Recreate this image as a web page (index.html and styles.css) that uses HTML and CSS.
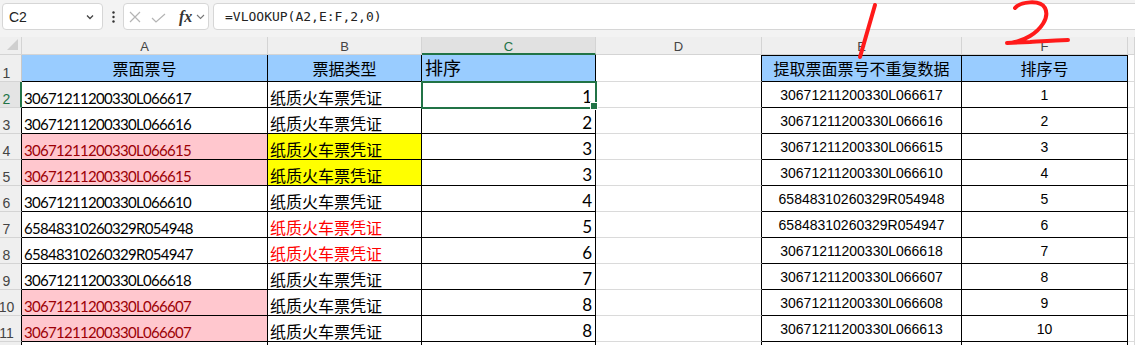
FILE: index.html
```html
<!DOCTYPE html>
<html lang="zh-CN">
<head>
<meta charset="utf-8">
<title>Sheet</title>
<link rel="stylesheet" href="styles.css">
</head>
<body>
<div class="app">
  <div class="toolbar">
    <div class="namebox"><span>C2</span>
      <svg class="chev" width="8" height="6" viewBox="0 0 8 6"><path d="M1 1.5 L4 4.5 L7 1.5" fill="none" stroke="#444" stroke-width="1.3"/></svg>
    </div>
    <div class="sep"><svg width="3" height="12" viewBox="0 0 3 12"><circle cx="1.5" cy="1.5" r="1.2" fill="#333"/><circle cx="1.5" cy="6" r="1.2" fill="#333"/><circle cx="1.5" cy="10.5" r="1.2" fill="#333"/></svg></div>
    <div class="fxbox">
      <svg class="ix" width="12" height="12" viewBox="0 0 12 12"><path d="M1 1 L11 11 M11 1 L1 11" stroke="#b4b4b4" stroke-width="1.2" fill="none"/></svg>
      <svg class="iv" width="15" height="10" viewBox="0 0 15 10"><path d="M1 5 L5 9 L14 1" stroke="#b4b4b4" stroke-width="1.2" fill="none"/></svg>
      <span class="fx">fx</span>
      <svg class="ic" width="9" height="6" viewBox="0 0 9 6"><path d="M1 1 L4.5 4.5 L8 1" fill="none" stroke="#777" stroke-width="1.1"/></svg>
    </div>
    <div class="formula">=VLOOKUP(A2,E:F,2,0)</div>
  </div>

  <div class="sheet">
    <div class="ch corner"><svg width="12" height="12" viewBox="0 0 12 12"><path d="M11 0 L11 11 L0 11 Z" fill="#cfcfcf"/></svg></div>
    <div class="ch">A</div>
    <div class="ch">B</div>
    <div class="ch on">C</div>
    <div class="ch">D</div>
    <div class="ch">E</div>
    <div class="ch">F</div>
    <div class="ch"></div>

    <div class="rh r1">1</div>
    <div class="c k h">票面票号</div>
    <div class="c k h">票据类型</div>
    <div class="c k h l">排序</div>
    <div class="c kr"></div>
    <div class="c k h t">提取票面票号不重复数据</div>
    <div class="c k h t">排序号</div>
    <div class="c"></div>

    <div class="rh on">2</div>
    <div class="c k num">30671211200330L066617</div>
    <div class="c k zh">纸质火车票凭证</div>
    <div class="c k n sel">1</div>
    <div class="c kr"></div>
    <div class="c k e">30671211200330L066617</div>
    <div class="c k e">1</div>
    <div class="c"></div>

    <div class="rh">3</div>
    <div class="c k num">30671211200330L066616</div>
    <div class="c k zh">纸质火车票凭证</div>
    <div class="c k n">2</div>
    <div class="c kr"></div>
    <div class="c k e">30671211200330L066616</div>
    <div class="c k e">2</div>
    <div class="c"></div>

    <div class="rh">4</div>
    <div class="c k num pk">30671211200330L066615</div>
    <div class="c k zh yl">纸质火车票凭证</div>
    <div class="c k n">3</div>
    <div class="c kr"></div>
    <div class="c k e">30671211200330L066615</div>
    <div class="c k e">3</div>
    <div class="c"></div>

    <div class="rh">5</div>
    <div class="c k num pk">30671211200330L066615</div>
    <div class="c k zh yl">纸质火车票凭证</div>
    <div class="c k n">3</div>
    <div class="c kr"></div>
    <div class="c k e">30671211200330L066610</div>
    <div class="c k e">4</div>
    <div class="c"></div>

    <div class="rh">6</div>
    <div class="c k num">30671211200330L066610</div>
    <div class="c k zh">纸质火车票凭证</div>
    <div class="c k n">4</div>
    <div class="c kr"></div>
    <div class="c k e">65848310260329R054948</div>
    <div class="c k e">5</div>
    <div class="c"></div>

    <div class="rh">7</div>
    <div class="c k num">65848310260329R054948</div>
    <div class="c k zh red">纸质火车票凭证</div>
    <div class="c k n">5</div>
    <div class="c kr"></div>
    <div class="c k e">65848310260329R054947</div>
    <div class="c k e">6</div>
    <div class="c"></div>

    <div class="rh">8</div>
    <div class="c k num">65848310260329R054947</div>
    <div class="c k zh red">纸质火车票凭证</div>
    <div class="c k n">6</div>
    <div class="c kr"></div>
    <div class="c k e">30671211200330L066618</div>
    <div class="c k e">7</div>
    <div class="c"></div>

    <div class="rh">9</div>
    <div class="c k num">30671211200330L066618</div>
    <div class="c k zh">纸质火车票凭证</div>
    <div class="c k n">7</div>
    <div class="c kr"></div>
    <div class="c k e">30671211200330L066607</div>
    <div class="c k e">8</div>
    <div class="c"></div>

    <div class="rh">10</div>
    <div class="c k num pk">30671211200330L066607</div>
    <div class="c k zh">纸质火车票凭证</div>
    <div class="c k n">8</div>
    <div class="c kr"></div>
    <div class="c k e">30671211200330L066608</div>
    <div class="c k e">9</div>
    <div class="c"></div>

    <div class="rh">11</div>
    <div class="c k num pk">30671211200330L066607</div>
    <div class="c k zh">纸质火车票凭证</div>
    <div class="c k n">8</div>
    <div class="c kr"></div>
    <div class="c k e">30671211200330L066613</div>
    <div class="c k e">10</div>
    <div class="c"></div>

    <div class="rh"></div>
    <div class="c k"></div>
    <div class="c k"></div>
    <div class="c k"></div>
    <div class="c kr"></div>
    <div class="c k"></div>
    <div class="c k"></div>
    <div class="c"></div>
  </div>

  <svg class="annot" width="1135" height="345" viewBox="0 0 1135 345">
    <path d="M875 5 L860 57" fill="none" stroke="#ff1a1a" stroke-width="4" stroke-linecap="round"/>
    <path d="M1015 8 C1020 2 1040 -1 1045 8 C1050 18 1040 30 1030 36 C1022 41 1012 43 1007 43 L1030 42 C1045 41 1058 40 1068 40" fill="none" stroke="#ff1a1a" stroke-width="4" stroke-linecap="round" stroke-linejoin="round"/>
  </svg>
</div>
</body>
</html>
```

FILE: styles.css
```css
* { box-sizing: border-box; margin: 0; padding: 0; }
html, body { width: 1135px; height: 345px; overflow: hidden; background: #fff; }
body { font-family: "Liberation Sans", Arial, sans-serif; }
.app { position: relative; width: 1135px; height: 345px; overflow: hidden; }

.toolbar {
  height: 37px; background: #f3f3f3; display: flex; align-items: flex-start;
  padding: 3px 0 0 2px; overflow: hidden;
}
.namebox {
  width: 101px; height: 27px; background: #fff; border: 1px solid #d6d6d6; border-radius: 4px;
  display: flex; align-items: center; justify-content: space-between; padding: 0 8px 0 6px;
  font-size: 14px; color: #222;
}
.sep { width: 20px; height: 27px; display: flex; align-items: center; justify-content: center; }
.fxbox {
  width: 86px; height: 27px; background: #fff; border: 1px solid #d6d6d6; border-radius: 4px;
  display: flex; align-items: center; padding-left: 5px;
}
.fxbox .iv { margin-left: 10px; margin-top: 2px; }
.fxbox .fx {
  margin-left: 13px; font-family: "Liberation Serif", serif; font-style: italic; font-weight: bold;
  font-size: 16px; color: #333; line-height: 16px;
}
.fxbox .ic { margin-left: 4px; margin-top: 1px; }
.formula {
  flex: 1; margin-left: 4px; margin-right: -10px; height: 27px; background: #fff;
  border: 1px solid #d6d6d6; border-radius: 4px; font-family: "DejaVu Sans Mono", monospace;
  font-size: 13px; padding-left: 11px; display: flex; align-items: center; color: #222;
}

.sheet {
  display: grid;
  grid-template-columns: 22px 246px 154px 174px 166px 200px 166px 1fr;
  grid-template-rows: 18px 27px repeat(11, 26px);
}
.ch {
  background: #efefef; border-right: 1px solid #d4d4d4; border-bottom: 1px solid #d4d4d4;
  display: flex; align-items: flex-end; justify-content: center;
  font-size: 13px; line-height: 12px; color: #444; padding-bottom: 1px;
}
.ch.corner { align-items: flex-end; justify-content: flex-end; padding: 0 2px 3px 0; }
.ch.on { background: #e1e1e1; color: #217346; border-bottom: 2px solid #217346; padding-bottom: 0; }

.rh {
  background: #efefef; border-right: 1px solid #000; border-bottom: 1px solid #d4d4d4;
  display: flex; align-items: flex-end; justify-content: center; padding-right: 8px;
  font-size: 14px; line-height: 16px; color: #444;
}
.rh.r1 { border-right-color: #c8c8c8; }
.rh.on { background: #e4e4e4; color: #217346; border-right: 2px solid #217346; padding-right: 7px; }

.c {
  border-right: 1px solid #dadada; border-bottom: 1px solid #dadada;
  display: flex; align-items: flex-end; overflow: hidden; white-space: nowrap; color: #000;
}
.k { border-right-color: #000; border-bottom-color: #000; }
.kr { border-right-color: #000; }
.t { box-shadow: inset 0 1px 0 #000; }

.h {
  background: #99ccff; font-family: "Noto Sans CJK SC", sans-serif; font-size: 16px; line-height: 20px;
  align-items: center; justify-content: center;
}
.h.l { justify-content: flex-start; font-size: 18px; padding-left: 3px; padding-bottom: 2px; }

.num {
  font-family: Lato, "Liberation Sans", sans-serif; font-size: 15px; letter-spacing: -0.7px;
  line-height: 18px; padding-left: 2px;
}
.zh { font-family: "Noto Sans CJK SC", sans-serif; font-size: 16px; line-height: 20px; padding-left: 2px; }
.n {
  font-family: Lato, "Liberation Sans", sans-serif; font-size: 17px; line-height: 20px;
  justify-content: flex-end; padding-right: 3px;
}
.e {
  font-family: "Liberation Sans", Arial, sans-serif; font-size: 14px; line-height: 16px;
  align-items: center; justify-content: center; padding-top: 1px;
}
.pk { background: #ffc7ce; color: #9c0006; }
.yl { background: #ffff00; }
.red { color: #ff0000; }

.sel { outline: 2px solid #217346; outline-offset: -1px; position: relative; z-index: 2; overflow: visible; }
.sel::after {
  content: ""; position: absolute; right: -3px; bottom: -3px; width: 6px; height: 6px;
  background: #217346; border: 1px solid #fff;
}

.annot { position: absolute; left: 0; top: 0; pointer-events: none; z-index: 5; }
```
